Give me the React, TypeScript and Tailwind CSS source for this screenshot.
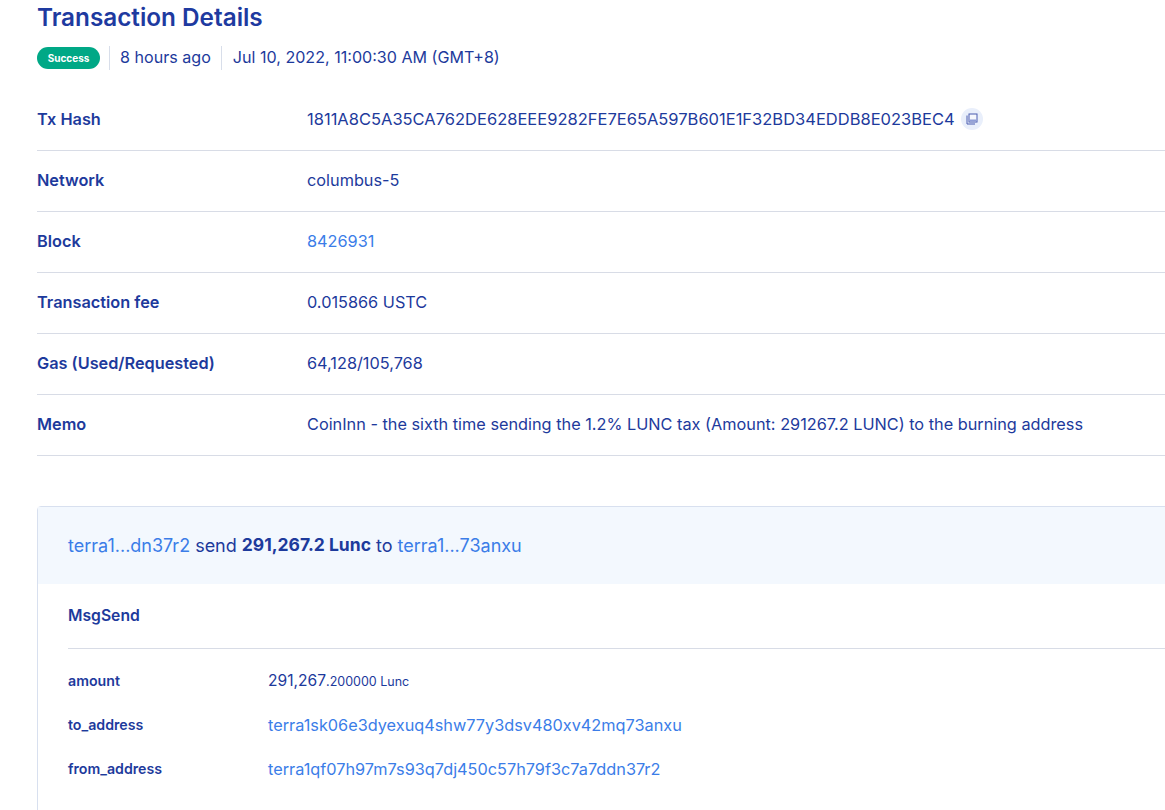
const rows = [
  { label: "Tx Hash", value: "1811A8C5A35CA762DE628EEE9282FE7E65A597B601E1F32BD34EDDB8E023BEC4", copy: true },
  { label: "Network", value: "columbus-5" },
  { label: "Block", value: "8426931", link: true },
  { label: "Transaction fee", value: "0.015866 USTC" },
  { label: "Gas (Used/Requested)", value: "64,128/105,768" },
  { label: "Memo", value: "CoinInn - the sixth time sending the 1.2% LUNC tax (Amount: 291267.2 LUNC) to the burning address" },
];

const CopyIcon = () => (
  <svg viewBox="0 0 12 12" className="h-3 w-3" fill="none">
    <path d="M1 2.5V11h8" stroke="#4a5cb0" strokeWidth="1" />
    <rect x="3" y="1" width="8" height="8" fill="#f5f7fd" stroke="#4a5cb0" strokeWidth="1" />
    <rect x="3.5" y="6.5" width="7" height="2" fill="#8f9dd6" />
  </svg>
);

const App = () => {
  return (
    <div className="w-[1165px] h-[810px] overflow-hidden bg-white pl-[37px] font-['Inter',sans-serif] text-[#1d3a9c]">
      <h1 className="h-[34px] text-[24.3px] font-semibold leading-[34px] text-[#1e3aa0]">Transaction Details</h1>
      <div className="mt-[13px] flex h-[22px] items-center text-[16.1px]">
        <span className="flex h-[22px] w-[63px] items-center justify-center rounded-full bg-[#00a886] text-[10px] font-bold text-white">Success</span>
        <span className="ml-[9px] h-[24px] w-px bg-[#d8deea]" />
        <span className="ml-[10px] pb-[2px]">8 hours ago</span>
        <span className="ml-[10px] h-[24px] w-px bg-[#d8deea]" />
        <span className="ml-[11px] pb-[2px]">Jul 10, 2022, 11:00:30 AM (GMT+8)</span>
      </div>

      <div className="mt-[21px]">
        {rows.map((row) => (
          <div key={row.label} className="flex h-[61px] items-center border-b border-[#d8dce6] pb-[2px] text-[16.3px]">
            <span className="w-[270px] font-semibold">{row.label}</span>
            <span className={row.copy ? "text-[16.5px]" : row.link ? "text-[#3b7de8]" : ""}>{row.value}</span>
            {row.copy && (
              <span className="ml-[6px] flex h-[22px] w-[22px] items-center justify-center rounded-full bg-[#e9effb]">
                <CopyIcon />
              </span>
            )}
          </div>
        ))}
      </div>

      <div className="mt-[50px] h-[400px] w-[1200px] rounded-t border border-[#d8e0ef]">
        <div className="flex h-[77px] items-center gap-[5px] bg-[#f3f8fe] pl-[30px] text-[18px]">
          <span className="text-[#3b7de8]">terra1...dn37r2</span>
          <span>send</span>
          <b className="text-[17.5px] font-bold">291,267.2 Lunc</b>
          <span>to</span>
          <span className="text-[#3b7de8]">terra1...73anxu</span>
        </div>
        <div className="pl-[30px]">
          <div className="flex h-[65px] items-center border-b border-[#d8dce6] text-[15.7px] font-semibold">MsgSend</div>
          <div className="flex flex-col pt-[10px] text-[16.3px]">
            <div className="flex h-[44px] items-center">
              <span className="w-[200px] text-[14.2px] font-semibold">amount</span>
              <span className="text-[15.6px]">291,267<span className="text-[12.5px]">.200000 Lunc</span></span>
            </div>
            <div className="flex h-[44px] items-center">
              <span className="w-[200px] text-[14.2px] font-semibold">to_address</span>
              <span className="text-[#3b7de8]">terra1sk06e3dyexuq4shw77y3dsv480xv42mq73anxu</span>
            </div>
            <div className="flex h-[44px] items-center">
              <span className="w-[200px] text-[14.2px] font-semibold">from_address</span>
              <span className="text-[#3b7de8]">terra1qf07h97m7s93q7dj450c57h79f3c7a7ddn37r2</span>
            </div>
          </div>
        </div>
      </div>
    </div>
  );
};

export default App;
